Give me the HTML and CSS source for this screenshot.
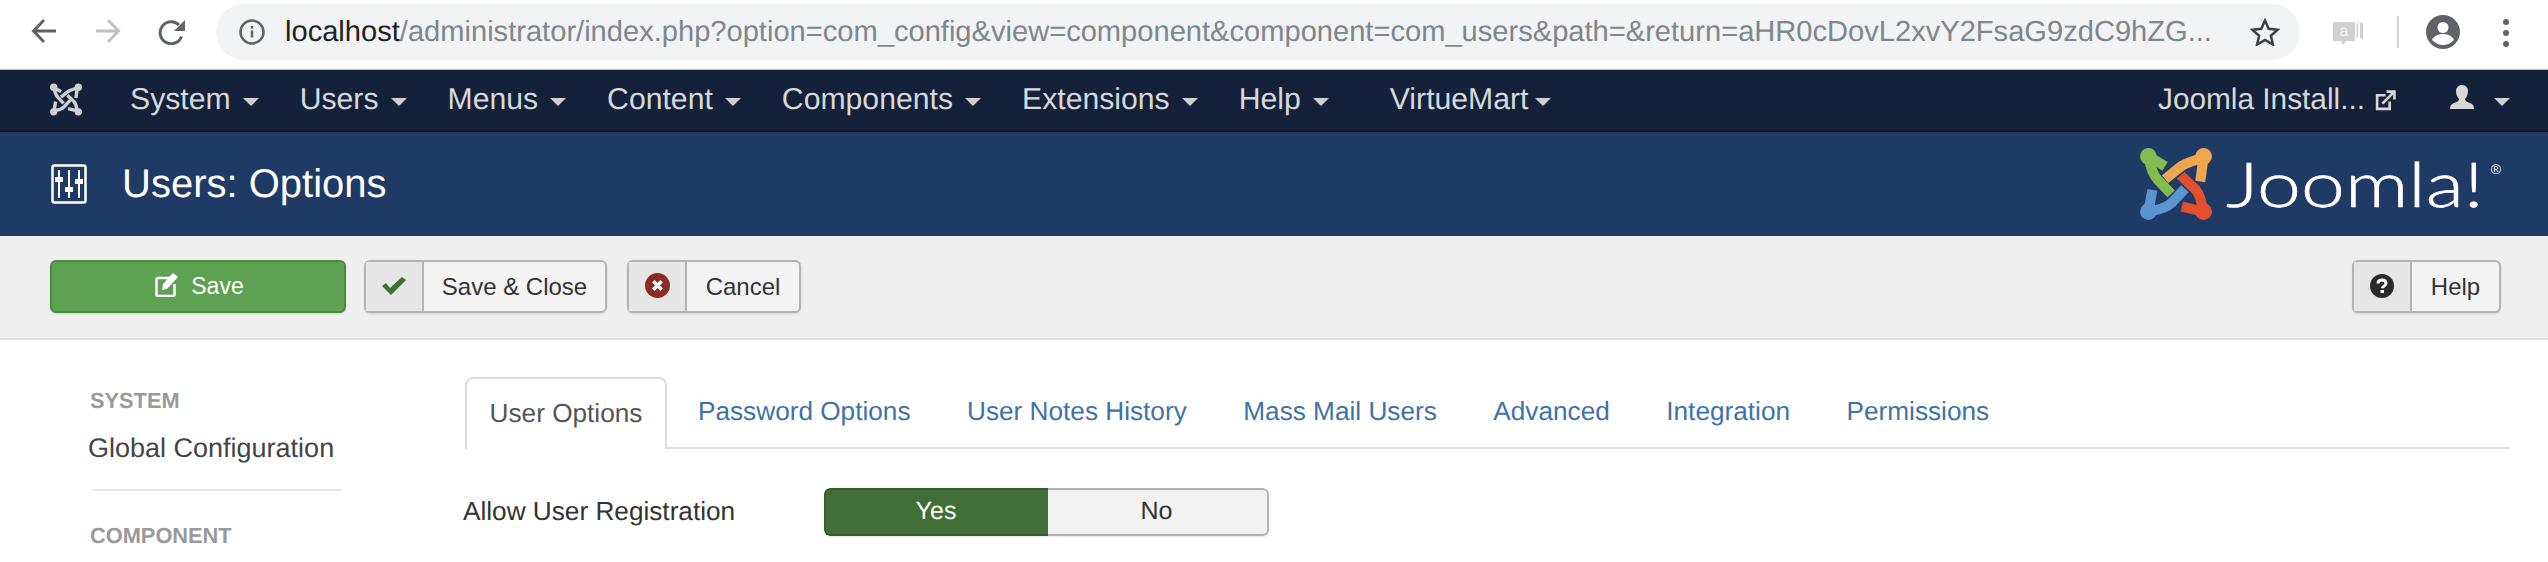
FILE: index.html
```html
<!DOCTYPE html>
<html lang="en">
<head>
<meta charset="utf-8">
<title>Users: Options</title>
<link rel="stylesheet" href="styles.css">
</head>
<body>
<div class="chrome">
  <svg class="ci back" viewBox="0 0 26 26"><path d="M25 13H3M13 2 2.500 13 13 24"/></svg>
  <svg class="ci fwd" viewBox="0 0 26 26"><path d="M1 13h22M13 2l10.500 11L13 24"/></svg>
  <svg class="ci reload" viewBox="0 0 28 26"><path d="M23.500 17.500A11 11 0 1 1 21 6"/><path class="solid" d="M27 1v11H16z"/></svg>
  <div class="omnibox">
    <svg class="info" viewBox="0 0 26 26"><circle cx="13" cy="13" r="11.500"/><path d="M13 11.500v7M13 7v2.500"/></svg>
    <span class="url"><span class="host">localhost</span>/administrator/index.php?option=com_config&amp;view=component&amp;component=com_users&amp;path=&amp;return=aHR0cDovL2xvY2FsaG9zdC9hZG...</span>
    <svg class="star" viewBox="0 0 30 28"><path d="M15 2.500l3.700 8.300 9 .9-6.800 6 2 8.800L15 22l-7.900 4.500 2-8.800-6.800-6 9-.9z"/></svg>
  </div>
  <svg class="ext" viewBox="0 0 32 28"><path d="M1 4h22v19H14l-3 4-2-4H1z"/><path d="M24.500 5H26v15h-1.500zM28 5l3-1v17l-3-1z"/><text class="ext-a" x="12" y="18" text-anchor="middle">a</text></svg>
  <span class="sep"></span>
  <svg class="avatar" viewBox="0 0 34 34"><circle class="face" cx="17" cy="17" r="17"/><circle class="skin" cx="17" cy="12.500" r="5.500"/><path class="skin" d="M6 25c2-5 8-6 11-6s9 1 11 6c-3 3-7 5-11 5s-8-2-11-5z"/></svg>
  <span class="dots"><i></i><i></i><i></i></span>
</div>

<nav class="navbar">
  <svg class="brand" viewBox="22 22 226 226">
    <g class="mono">
      <path d="M165 140 120 188Q100 207 62 212M50 215 62 150"/>
      <path d="M118 162 78 120Q58 98 52 55M50 50 100 80"/>
      <path d="M100 118 150 78Q170 66 212 55M215 50 205 125"/>
      <path d="M145 105 192 150Q208 170 212 212M215 215 150 200"/>
    </g>
    <circle class="dot" cx="48" cy="48" r="26"/><circle class="dot" cx="222" cy="48" r="26"/><circle class="dot" cx="48" cy="222" r="26"/><circle class="dot" cx="222" cy="222" r="26"/>
  </svg>
  <ul class="menu">
    <li>System<b class="caret"></b></li>
    <li>Users<b class="caret"></b></li>
    <li>Menus<b class="caret"></b></li>
    <li>Content<b class="caret"></b></li>
    <li>Components<b class="caret"></b></li>
    <li>Extensions<b class="caret"></b></li>
    <li class="vm-gap">Help<b class="caret"></b></li>
    <li class="vm">VirtueMart<b class="caret"></b></li>
  </ul>
  <div class="nav-right">
    <span class="site">Joomla Install...</span>
    <svg class="extlink" viewBox="0 0 20 20"><path d="M14 11v7H2V5h8"/><path d="M7 13 18 2M11 1.500h7.500V9"/></svg>
    <svg class="user" viewBox="0 0 24 24"><path d="M12 0c4 0 6 3 6 6.500S16 13 15 14c0 2 2 3 5 4s4 3 4 6H0c0-3 1-5 4-6s5-2 5-4C8 13 6 10 6 6.500S8 0 12 0z"/></svg>
    <b class="caret"></b>
  </div>
</nav>

<header class="titlebar">
  <svg class="title-icon" viewBox="0 0 36 40"><rect x="1.500" y="1.500" width="33" height="37" rx="2"/><path class="rails" d="M8 6v28M18 6v28M28 6v28"/><rect class="knob" x="4" y="13" width="8" height="5"/><rect class="knob" x="14" y="23" width="8" height="5"/><rect class="knob" x="24" y="15" width="8" height="5"/></svg>
  <h1>Users: Options</h1>
  <div class="logo">
    <svg class="logo-mark" viewBox="25 25 215 215">
      <g class="blue"><path class="gap" d="M165 140 120 188Q100 207 62 212"/><path d="M165 140 120 188Q100 207 62 212M50 215 62 150"/></g>
      <g class="red"><path class="gap" d="M145 105 192 150Q208 170 212 212"/><path d="M145 105 192 150Q208 170 212 212M215 215 150 200"/></g>
      <g class="green"><path class="gap" d="M118 162 78 120Q58 98 52 55"/><path d="M118 162 78 120Q58 98 52 55M50 50 100 80"/></g>
      <g class="orange"><path class="gap" d="M100 118 150 78Q170 66 212 55"/><path d="M100 118 150 78Q170 66 212 55M215 50 205 125"/></g>
      <circle class="c-green" cx="50" cy="50" r="25"/><circle class="c-orange" cx="215" cy="50" r="25"/><circle class="c-blue" cx="50" cy="215" r="25"/><circle class="c-red" cx="215" cy="215" r="25"/>
    </svg>
    <span class="wordmark">Joomla!</span><span class="reg">®</span>
  </div>
</header>

<div class="toolbar">
  <button class="btn btn-save"><svg class="save-icon" viewBox="0 0 24 24"><path d="M15 5H3a1.500 1.500 0 0 0-1.500 1.500v15A1.500 1.500 0 0 0 3 23h15a1.500 1.500 0 0 0 1.500-1.500V11"/><path class="fill" d="M8 11 18 0l5 4-11 12-5 1z"/></svg>Save</button>
  <button class="btn btn-split w-close"><span class="ico"><svg class="check" viewBox="0 0 24 18"><path d="M0 9l4-3 4 5L20 0l4 3L9 18z"/></svg></span><span class="lbl">Save &amp; Close</span></button>
  <button class="btn btn-split w-cancel"><span class="ico"><svg class="cancel" viewBox="0 0 24 24"><circle cx="12" cy="12" r="12"/><path d="M8 8l8 8M16 8l-8 8"/></svg></span><span class="lbl">Cancel</span></button>
  <button class="btn btn-split w-help"><span class="ico"><svg class="help" viewBox="0 0 24 24"><circle cx="12" cy="12" r="12"/><path d="M8 9.500C8 7 10 6 12 6s4 1 4 3.200c0 2.800-3.500 2.600-3.500 5"/><rect x="10.500" y="16" width="3.500" height="3"/></svg></span><span class="lbl">Help</span></button>
</div>

<main class="content">
  <aside class="sidebar">
    <div class="side-head">SYSTEM</div>
    <div class="side-link">Global Configuration</div>
    <hr class="side-rule">
    <div class="side-head">COMPONENT</div>
  </aside>
  <section class="panel">
    <ul class="tabs">
      <li class="active">User Options</li>
      <li>Password Options</li>
      <li>User Notes History</li>
      <li>Mass Mail Users</li>
      <li>Advanced</li>
      <li>Integration</li>
      <li>Permissions</li>
    </ul>
    <div class="field">
      <label class="field-label">Allow User Registration</label>
      <div class="toggle"><span class="yes">Yes</span><span class="no">No</span></div>
    </div>
  </section>
</main>
</body>
</html>
```
FILE: styles.css
```css
* { box-sizing: border-box; }
html, body { margin: 0; padding: 0; height: 562px; overflow: hidden; background: #fff; }
body { font-family: "Liberation Sans", Arial, sans-serif; color: #333; text-rendering: geometricPrecision; }
ul { list-style: none; margin: 0; padding: 0; }

/* browser chrome */
.chrome { height: 70px; display: flex; align-items: flex-start; border-bottom: 1px solid #b9bbbe; background: #fff; position: relative; }
.ci { fill: none; stroke-width: 3; flex: none; }
.back { width: 26px; height: 26px; margin: 18px 0 0 31px; stroke: #5f6368; }
.fwd { width: 26px; height: 26px; margin: 18px 0 0 38px; stroke: #bdc1c6; }
.reload { width: 28px; height: 26px; margin: 19px 0 0 37px; stroke: #5f6368; }
.reload .solid { fill: #5f6368; stroke: none; }
.omnibox { flex: none; width: 2084px; height: 56px; margin: 4px 0 0 30px; border-radius: 28px; background: #f1f3f4; display: flex; align-items: center; padding-left: 23px; }
.info { width: 26px; height: 26px; fill: none; stroke: #5f6368; stroke-width: 2.500; flex: none; }
.url { margin-left: 20px; width: 1945px; flex: none; font-size: 29.100px; line-height: 36px; color: #80868b; white-space: nowrap; }
.host { color: #202124; }
.star { width: 30px; height: 28px; margin-left: 20px; fill: none; stroke: #3c4043; stroke-width: 2.500; flex: none; }
.ext { width: 32px; height: 28px; margin: 18px 0 0 32px; fill: #d0d0d0; flex: none; }
.ext .ext-a { fill: #f4f4f4; font-size: 16px; font-family: "Liberation Sans", sans-serif; }
.sep { width: 2px; height: 32px; margin: 16px 0 0 33px; background: #d3d4d6; flex: none; }
.avatar { width: 34px; height: 34px; margin: 15px 0 0 27px; flex: none; }
.avatar .face { fill: #5f6368; }
.avatar .skin { fill: #fff; }
.dots { display: flex; flex-direction: column; gap: 5px; margin: 19px 0 0 43px; }
.dots i { width: 6px; height: 6px; border-radius: 50%; background: #5f6368; display: block; }

/* admin nav */
.navbar { height: 62px; background: #14213b; border-bottom: 2px solid #0d1729; display: flex; align-items: center; padding-left: 50px; color: #d8d8d8; font-size: 30.200px; }
.brand { width: 32px; height: 33px; flex: none; margin-top: -2px; }
.mono path { fill: none; stroke: #cfcfcf; stroke-width: 24; }
.dot { fill: #cfcfcf; }
.menu { display: flex; gap: 41px; margin-left: 48px; }
.menu li { display: flex; align-items: center; white-space: nowrap; }
.caret { display: inline-block; width: 0; height: 0; margin-left: 12px; margin-top: 4px; border-left: 8px solid transparent; border-right: 8px solid transparent; border-top: 8px solid #cfcfcf; }
.menu .vm-gap { margin-right: 20px; }
.vm .caret { margin-left: 7px; }
.nav-right { margin-left: auto; display: flex; align-items: center; padding-right: 38px; font-size: 29.800px; }
.site { white-space: nowrap; }
.extlink { width: 21px; height: 21px; margin-left: 10px; fill: none; stroke: #d8d8d8; stroke-width: 2.500; }
.user { width: 24px; height: 24px; margin-left: 54px; margin-top: -6px; fill: #d8d8d8; }
.nav-right .caret { margin-left: 20px; }

/* title */
.titlebar { height: 104px; background: #203a66; display: flex; align-items: center; padding-left: 51px; color: #fff; }
.title-icon { width: 36px; height: 40px; fill: none; stroke: #fff; stroke-width: 2.500; flex: none; }
.title-icon .rails { stroke-width: 2; }
.title-icon .knob { fill: #fff; stroke: none; }
.titlebar h1 { margin: 0 0 0 35px; font-size: 40px; font-weight: 400; line-height: 1; }
.logo { margin-left: auto; display: flex; align-items: flex-start; padding-right: 47px; height: 72px; }
.logo-mark { width: 72px; height: 72px; flex: none; }
.logo-mark g path { fill: none; stroke-width: 30; }
.logo-mark .gap { stroke: #203a66; stroke-width: 40; }
.blue path { stroke: #5b95cf; } .c-blue { fill: #5b95cf; }
.red path { stroke: #e4502d; } .c-red { fill: #e4502d; }
.green path { stroke: #84bd4f; } .c-green { fill: #84bd4f; }
.orange path { stroke: #efa650; } .c-orange { fill: #efa650; }
.wordmark { font-family: Lato, "Liberation Sans", sans-serif; font-weight: 300; font-size: 62px; line-height: 72px; margin-left: 14px; width: 264px; display: block; white-space: nowrap; -webkit-text-stroke: .6px #fff; transform: scaleX(1.27); transform-origin: left center; }
.reg { font-size: 14px; line-height: 1; margin: 14px 0 0 1px; }

/* toolbar */
.toolbar { height: 104px; background: #efefef; border-bottom: 2px solid #dedede; display: flex; align-items: flex-start; padding: 24px 47px 0 50px; gap: 18px; }
.btn { height: 53px; padding: 0; margin: 0; font: inherit; font-size: 24px; border-radius: 6px; display: flex; align-items: stretch; box-shadow: 0 1px 2px rgba(0,0,0,.12); color: #333; }
.btn-save { width: 296px; background: #5fa152; border: 2px solid #4a8a3d; color: #fff; align-items: center; justify-content: center; gap: 12px; font-size: 23px; padding-left: 3px; }
.save-icon { width: 24px; height: 24px; fill: none; stroke: #fff; stroke-width: 2.500; margin-top: -3px; }
.save-icon .fill { fill: #fff; stroke: none; }
.btn-split { background: #f3f3f3; border: 2px solid #b3b3b3; }
.ico { flex: none; width: 58px; background: #e6e6e6; border-right: 2px solid #b3b3b3; display: flex; align-items: center; justify-content: center; }
.ico svg { margin-top: -2px; }
.lbl { flex: 1; display: flex; align-items: center; justify-content: center; }
.w-close { width: 243px; }
.w-cancel { width: 174px; margin-left: 2px; }
.w-help { width: 149px; margin-left: auto; }
.check { width: 24px; height: 18px; fill: #3f7135; }
.cancel { width: 25px; height: 25px; fill: #8c2b22; }
.cancel path { stroke: #fff; stroke-width: 3.500; fill: none; }
.help { width: 24px; height: 24px; fill: #2b2b2b; }
.help path { fill: none; stroke: #fff; stroke-width: 3; }
.help rect { fill: #fff; }

/* content */
.content { display: flex; align-items: flex-start; padding-left: 88px; }
.sidebar { width: 254px; flex: none; padding-top: 49px; }
.side-head { font-size: 21.800px; font-weight: 700; color: #9a9a9a; line-height: 24px; margin-left: 2px; }
.side-link { font-size: 27px; line-height: 32px; margin-top: 19px; color: #444; white-space: nowrap; }
.side-rule { border: 0; height: 2px; background: #e5e5e5; margin: 25px 0 0 4px; width: 250px; }
.side-rule + .side-head { margin-top: 33px; }
.panel { margin-left: 123px; width: 2045px; padding-top: 37px; }
.tabs { display: flex; height: 72px; border-bottom: 2px solid #dddddd; font-size: 26.200px; color: #3f72a9; gap: 56.500px; }
.tabs li { height: 70px; line-height: 68px; white-space: nowrap; }
.tabs .active { width: 202px; height: 72px; text-align: center; color: #555; background: #fff; border: 2px solid #ddd; border-bottom: 0; border-radius: 8px 8px 0 0; margin-right: -25.500px; }
.field { display: flex; align-items: center; margin-top: 39px; }
.field-label { width: 361px; flex: none; font-size: 26.200px; line-height: 30px; margin: -2px 0 0 -2px; white-space: nowrap; color: #333; }
.toggle { display: flex; height: 48px; width: 445px; font-size: 25px; border-radius: 6px; overflow: hidden; box-shadow: 0 1px 2px rgba(0,0,0,.1); }
.yes { width: 224px; background: #406e35; border: 2px solid #345b2b; border-width: 2px 0 2px 2px; border-radius: 6px 0 0 6px; color: #fff; text-align: center; line-height: 42px; padding-right: 2px; }
.no { flex: 1; background: #f2f2f2; border: 2px solid #b3b3b3; border-left: 0; border-radius: 0 6px 6px 0; color: #333; text-align: center; line-height: 42px; padding-right: 2px; }
```
